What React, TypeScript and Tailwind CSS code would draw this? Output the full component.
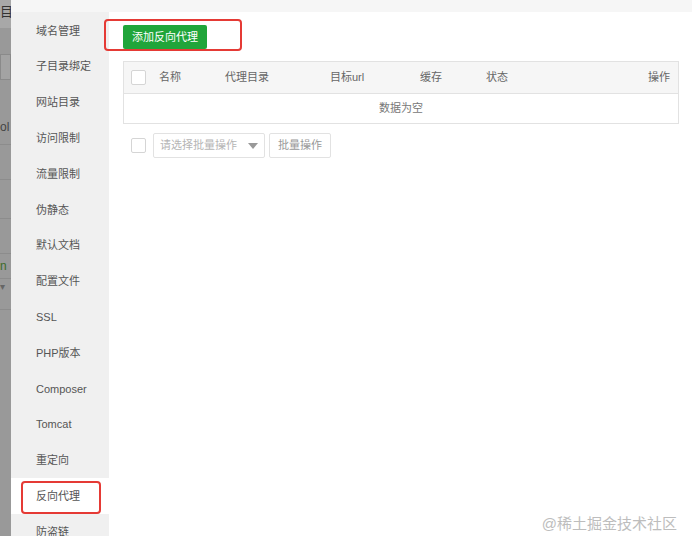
import { useState } from "react";

const MENU = [
  "域名管理",
  "子目录绑定",
  "网站目录",
  "访问限制",
  "流量限制",
  "伪静态",
  "默认文档",
  "配置文件",
  "SSL",
  "PHP版本",
  "Composer",
  "Tomcat",
  "重定向",
  "反向代理",
  "防盗链",
];

const COLS = [
  { label: "名称", cls: "w-[66px]" },
  { label: "代理目录", cls: "w-[105px]" },
  { label: "目标url", cls: "w-[90px]" },
  { label: "缓存", cls: "w-[66px]" },
  { label: "状态", cls: "flex-1" },
];

function Checkbox() {
  return <span className="block h-[15px] w-[15px] rounded-[2px] border border-[#d5d5d5] bg-white" />;
}

export default function App() {
  const [active] = useState("反向代理");

  return (
    <div
      className="relative flex h-[536px] w-[692px] overflow-hidden bg-white text-[11px] text-[#555]"
      style={{ fontFamily: '"Liberation Sans", "Noto Sans CJK SC", sans-serif' }}
    >
      {/* dimmed page behind the dialog */}
      <div className="flex w-[11px] shrink-0 flex-col bg-[#999]">
        <div className="h-[28px] bg-[#a8a8a8] pt-[4px] text-[13px] leading-[16px] text-[#333]">目</div>
        <div className="mt-[26px] h-[26px] border border-[#8a8a8a] bg-[#a3a3a3]" />
        <div className="mt-[38px] h-[20px] text-[12px] text-[#444]">ol</div>
        <div className="mt-[6px] border-t border-[#8c8c8c]" />
        <div className="mt-[34px] border-t border-[#8c8c8c]" />
        <div className="mt-[38px] border-t border-[#8c8c8c]" />
        <div className="mt-[34px] border-t border-[#8c8c8c]" />
        <div className="h-[24px] pt-[4px] text-[12px] leading-[16px] text-[#3d6b2a]">n</div>
        <div className="border-t border-[#8c8c8c]" />
        <div className="h-[30px] text-[10px] text-[#666]">▾</div>
        <div className="border-t border-[#8c8c8c]" />
      </div>

      <div className="flex flex-1 flex-col">
        <div className="h-[12px] shrink-0 bg-[#f6f6f6]" />
        <div className="flex flex-1">
          {/* side menu */}
          <div className="relative w-[98px] shrink-0 bg-[#f0f0f0] pt-[1px]">
            {MENU.map((m) => (
              <div
                key={m}
                className={`flex h-[35.8px] items-center pl-[25px] ${m === active ? "bg-white" : ""}`}
              >
                {m}
              </div>
            ))}
            <div className="absolute left-[10px] top-[469px] h-[33px] w-[80px] rounded-[4px] border-2 border-[#e53a35]" />
          </div>

          {/* content */}
          <div className="relative flex-1 px-[14px] pt-[13px]">
            <button className="h-[24px] rounded-[2px] bg-[#20a53a] px-[9px] text-[11px] text-white">
              添加反向代理
            </button>
            <div className="absolute left-[-5px] top-[7px] h-[32px] w-[138px] rounded-[4px] border-2 border-[#e53a35]" />

            <div className="mt-[12px] w-[556px] border border-[#e2e2e2]">
              <div className="flex h-[31px] items-center bg-[#f6f6f6] pl-[7px] pr-[8px] text-[#666]">
                <span className="w-[28px]">
                  <Checkbox />
                </span>
                {COLS.map((c) => (
                  <span key={c.label} className={c.cls}>
                    {c.label}
                  </span>
                ))}
                <span>操作</span>
              </div>
              <div className="flex h-[30px] items-center justify-center border-t border-[#e2e2e2] text-[#777]">
                数据为空
              </div>
            </div>

            <div className="mt-[9px] flex items-center pl-[8px]">
              <span className="w-[22px]">
                <Checkbox />
              </span>
              <div className="flex h-[25px] w-[112px] items-center justify-between rounded-[2px] border border-[#e2e2e2] pl-[6px] pr-[6px] text-[#b5b5b5]">
                <span>请选择批量操作</span>
                <span className="h-0 w-0 border-x-[5px] border-t-[6px] border-x-transparent border-t-[#999]" />
              </div>
              <button className="ml-[4px] h-[25px] w-[62px] rounded-[2px] border border-[#e2e2e2] text-[11px] text-[#999]">
                批量操作
              </button>
            </div>

            <div className="absolute bottom-[14px] right-[16px] text-[15px] text-[#bdbdbd]">@稀土掘金技术社区</div>
          </div>
        </div>
      </div>
    </div>
  );
}
